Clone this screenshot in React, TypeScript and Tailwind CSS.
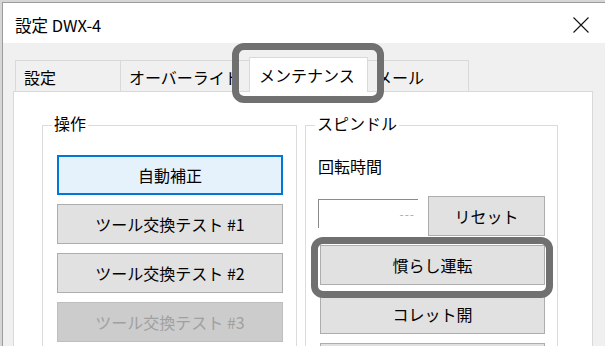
import React from 'react'

const tabs = [
  { label: '設定', width: 'w-[106px]' },
  { label: 'オーバーライド', width: 'w-[130px]' },
  { label: 'メンテナンス', width: 'w-[119px]', active: true },
  { label: 'メール', width: 'w-[102px]' },
]

type Variant = 'normal' | 'focused' | 'disabled'

const variants: Record<Variant, string> = {
  normal: 'border border-[#adadad] bg-[#e1e1e1] text-black',
  focused: 'border-2 border-[#0078d7] bg-[#e5f1fb] text-black',
  disabled: 'border border-[#bfbfbf] bg-[#cccccc] text-[#a0a0a0]',
}

function Button({
  children,
  width,
  variant = 'normal',
}: {
  children?: React.ReactNode
  width: string
  variant?: Variant
}) {
  return (
    <div className={`h-[40px] ${width} flex items-center justify-center leading-[20px] ${variants[variant]}`}>
      {children}
    </div>
  )
}

function Group({ title, className, children }: { title: string; className: string; children: React.ReactNode }) {
  return (
    <fieldset className={`border border-[#dcdcdc] ${className}`}>
      <legend className="ml-[9px] px-[2px] pb-[5px] leading-[20px]">{title}</legend>
      {children}
    </fieldset>
  )
}

export default function App() {
  return (
    <div className="relative w-[605px] h-[346px] overflow-hidden bg-[#d6d6d6] pl-[2px] pt-[2px] text-[16px] text-black font-['Noto_Sans_CJK_JP',sans-serif]">
      <div className="h-[400px] w-[640px] border-l border-t border-[#9c9c9c] bg-[#f0f0f0] flex flex-col">
        {/* title bar */}
        <div className="h-[40px] bg-white flex items-center pl-[12px] shrink-0">
          <span className="leading-[20px] mt-[4px] text-[16.5px]">設定 DWX-4</span>
          <svg className="ml-[472px] mt-[3px]" width="16" height="16" viewBox="0 0 16 16">
            <path d="M0.5 0.5 L15.5 15.5 M15.5 0.5 L0.5 15.5" stroke="#111" strokeWidth="1.1" fill="none" />
          </svg>
        </div>

        <div className="pl-[10px] pt-[14px] flex flex-col flex-1">
          {/* tab strip */}
          <div className="flex items-end h-[34px] pl-[2px]">
            {tabs.map((t) =>
              t.active ? (
                <div
                  key={t.label}
                  className={`${t.width} h-[35px] -mb-px -ml-px relative z-10 bg-white border border-b-0 border-[#d9d9d9] pl-[9px] flex items-center leading-[20px]`}
                >
                  {t.label}
                </div>
              ) : (
                <div
                  key={t.label}
                  className={`${t.width} h-[31px] -ml-px first:ml-0 bg-[#f0f0f0] border border-b-0 border-[#d9d9d9] pl-[8px] pt-[1px] flex items-center leading-[20px] overflow-hidden whitespace-nowrap`}
                >
                  {t.label}
                </div>
              )
            )}
          </div>

          {/* panel */}
          <div className="w-[580px] flex-1 border border-[#d9d9d9] bg-white flex items-start pl-[28px] pt-[21px]">
            <Group title="操作" className="w-[255px] h-[300px]">
              <div className="flex flex-col gap-[9px] pl-[14px] pt-[17px]">
                <Button width="w-[226px]" variant="focused">自動補正</Button>
                <Button width="w-[226px]">ツール交換テスト #1</Button>
                <Button width="w-[226px]">ツール交換テスト #2</Button>
                <Button width="w-[226px]" variant="disabled">ツール交換テスト #3</Button>
              </div>
            </Group>

            <Group title="スピンドル" className="w-[253px] h-[300px] ml-[8px]">
              <div className="flex flex-col pl-[12px] pt-[18px]">
                <div className="leading-[20px]">回転時間</div>
                <div className="flex items-start gap-[10px] mt-[20px]">
                  <div className="w-[100px] h-[29px] mt-[3px] border-l border-t border-[#8a8a8a] flex items-center justify-end pr-[3px] text-[#a8a8a8] text-[12px] tracking-[1px]">
                    ---
                  </div>
                  <Button width="w-[117px]">リセット</Button>
                </div>
                <div className="flex flex-col gap-[9px] mt-[9px] pl-[2px]">
                  <Button width="w-[225px]">慣らし運転</Button>
                  <Button width="w-[225px]">コレット開</Button>
                  <Button width="w-[225px]" />
                </div>
              </div>
            </Group>
          </div>
        </div>
      </div>

      {/* highlight overlays */}
      <div className="absolute left-[232px] top-[43px] w-[152px] h-[60px] border-[7px] border-[#707070] rounded-[12px]" />
      <div className="absolute left-[311px] top-[237px] w-[242px] h-[61px] border-[7px] border-[#707070] rounded-[12px]" />
    </div>
  )
}
